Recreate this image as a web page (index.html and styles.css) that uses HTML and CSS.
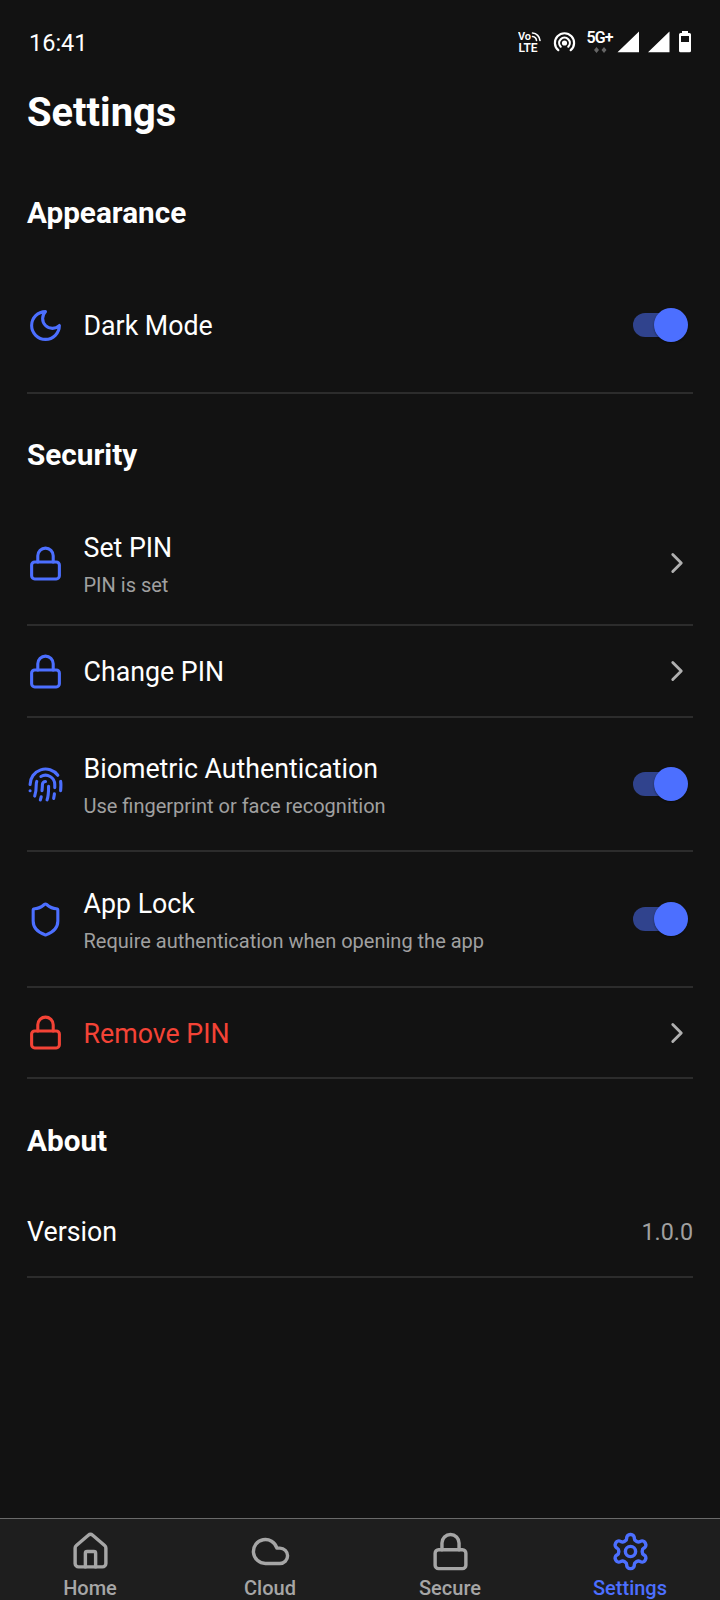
FILE: index.html
```html
<!DOCTYPE html>
<html lang="en">
<head>
<meta charset="utf-8">
<title>Settings</title>
<link rel="stylesheet" href="styles.css">
</head>
<body>
<svg class="sprite" width="0" height="0">
  <symbol id="lock" viewBox="0 0 24 24"><rect x="3" y="11" width="18" height="11" rx="2"/><path d="M7 11V7a5 5 0 0 1 10 0v4"/></symbol>
  <symbol id="chevron" viewBox="0 0 24 24"><path d="m9 18 6-6-6-6"/></symbol>
</svg>
<div class="screen">
  <header class="status">
    <span class="clock">16:41</span>
    <svg class="status-icons" viewBox="0 0 180 30" width="180" height="30">
      <g class="status-text">
        <text x="0" y="12.5" font-size="11" textLength="13">Vo</text>
        <text x="0.5" y="25" font-size="12" textLength="19">LTE</text>
        <text x="68.5" y="15.5" font-size="16" textLength="27">5G+</text>
      </g>
      <g class="status-line">
        <path d="M14.500 6a8 8 0 0 1 7.500 7.500M14.500 9.500a4.500 4.500 0 0 1 4 4" stroke-width="1.600"/>
        <path d="M40.300 23.200a9.600 9.600 0 1 1 12.400 0M42.700 19.700a5.300 5.300 0 1 1 7.600 0" stroke-width="2.200"/>
      </g>
      <circle class="fill" cx="46.500" cy="16" r="2.600"/>
      <path class="arrows" d="M78.500 20l2.500 3-2.500 3-2.500-3zM86 20l2.500 3-2.500 3-2.500-3z"/>
      <path class="fill" d="M99.500 25.300L121 4.500v20.800zM130 25.300L151.500 4.500v20.800z"/>
      <path class="fill" fill-rule="evenodd" d="M164 4h6v2h1.500q1.500 0 1.500 1.500v16.300q0 1.500-1.500 1.500h-9q-1.500 0-1.500-1.500V7.500q0-1.500 1.500-1.500h1.500zM163 9v6h8V9z"/>
    </svg>
  </header>

  <main class="content">
    <h1 class="title">Settings</h1>

    <h2 class="section section-appearance">Appearance</h2>
    <div class="row row-dark">
      <svg class="icon" viewBox="0 0 24 24"><path d="M12 3a6 6 0 0 0 9 9 9 9 0 1 1-9-9Z"/></svg>
      <div class="label">Dark Mode</div>
      <div class="switch"><i class="thumb"></i></div>
    </div>

    <h2 class="section section-security">Security</h2>
    <div class="row row-set">
      <svg class="icon"><use href="#lock"/></svg>
      <div class="text"><div class="label">Set PIN</div><div class="sub">PIN is set</div></div>
      <svg class="chevron"><use href="#chevron"/></svg>
    </div>
    <div class="row row-change">
      <svg class="icon"><use href="#lock"/></svg>
      <div class="label">Change PIN</div>
      <svg class="chevron"><use href="#chevron"/></svg>
    </div>
    <div class="row row-bio">
      <svg class="icon" viewBox="0 0 24 24"><path d="M12 10a2 2 0 0 0-2 2c0 1.020-.1 2.510-.26 4M14 13.120c0 2.380 0 6.380-1 8.880M17.290 21.020c.12-.6.43-2.300.5-3.020M2 12a10 10 0 0 1 18-6M2 16h.01M21.800 16c.2-2 .131-5.354 0-6M5 19.500C5.500 18 6 15 6 12a6 6 0 0 1 .34-2M8.650 22c.21-.66.45-1.320.57-2M9 6.800a6 6 0 0 1 9 5.200v2"/></svg>
      <div class="text"><div class="label">Biometric Authentication</div><div class="sub">Use fingerprint or face recognition</div></div>
      <div class="switch"><i class="thumb"></i></div>
    </div>
    <div class="row row-applock">
      <svg class="icon" viewBox="0 0 24 24"><path d="M20 13c0 5-3.500 7.500-7.660 8.950a1 1 0 0 1-.67-.01C7.500 20.500 4 18 4 13V6a1 1 0 0 1 1-1c2 0 4.500-1.200 6.240-2.720a1.170 1.170 0 0 1 1.520 0C14.510 3.810 17 5 19 5a1 1 0 0 1 1 1z"/></svg>
      <div class="text"><div class="label">App Lock</div><div class="sub">Require authentication when opening the app</div></div>
      <div class="switch"><i class="thumb"></i></div>
    </div>
    <div class="row row-remove">
      <svg class="icon danger"><use href="#lock"/></svg>
      <div class="label danger">Remove PIN</div>
      <svg class="chevron"><use href="#chevron"/></svg>
    </div>

    <h2 class="section section-about">About</h2>
    <div class="row row-version">
      <div class="label">Version</div>
      <div class="value">1.0.0</div>
    </div>
  </main>

  <nav class="tabs">
    <div class="tab">
      <svg class="tab-icon" viewBox="0 0 24 24"><path d="M15 21v-8a1 1 0 0 0-1-1h-4a1 1 0 0 0-1 1v8"/><path d="M3 10a2 2 0 0 1 .709-1.528l7-5.999a2 2 0 0 1 2.582 0l7 5.999A2 2 0 0 1 21 10v9a2 2 0 0 1-2 2H5a2 2 0 0 1-2-2z"/></svg>
      <span>Home</span>
    </div>
    <div class="tab">
      <svg class="tab-icon" viewBox="0 0 24 24"><path d="M17.500 19H9a7 7 0 1 1 6.710-9h1.790a4.500 4.500 0 1 1 0 9Z"/></svg>
      <span>Cloud</span>
    </div>
    <div class="tab">
      <svg class="tab-icon"><use href="#lock"/></svg>
      <span>Secure</span>
    </div>
    <div class="tab active">
      <svg class="tab-icon" viewBox="0 0 24 24"><path d="M12.220 2h-.44a2 2 0 0 0-2 2v.18a2 2 0 0 1-1 1.730l-.43.25a2 2 0 0 1-2 0l-.15-.08a2 2 0 0 0-2.730.73l-.22.38a2 2 0 0 0 .73 2.730l.15.1a2 2 0 0 1 1 1.720v.51a2 2 0 0 1-1 1.740l-.15.09a2 2 0 0 0-.73 2.730l.22.38a2 2 0 0 0 2.730.73l.15-.08a2 2 0 0 1 2 0l.43.25a2 2 0 0 1 1 1.730V20a2 2 0 0 0 2 2h.44a2 2 0 0 0 2-2v-.18a2 2 0 0 1 1-1.730l.43-.25a2 2 0 0 1 2 0l.15.08a2 2 0 0 0 2.730-.73l.22-.39a2 2 0 0 0-.73-2.730l-.15-.08a2 2 0 0 1-1-1.740v-.5a2 2 0 0 1 1-1.740l.15-.09a2 2 0 0 0 .73-2.730l-.22-.38a2 2 0 0 0-2.730-.73l-.15.08a2 2 0 0 1-2 0l-.43-.25a2 2 0 0 1-1-1.730V4a2 2 0 0 0-2-2z"/><circle cx="12" cy="12" r="3"/></svg>
      <span>Settings</span>
    </div>
  </nav>
</div>
</body>
</html>
```
FILE: styles.css
```css
* { box-sizing: border-box; }
body { margin: 0; background: #121212; color: #fff; font-family: Roboto, "Liberation Sans", sans-serif; }
.sprite { display: block; position: absolute; }
.screen { width: 720px; height: 1600px; display: flex; flex-direction: column; overflow: hidden; }

.status { height: 84px; flex: none; display: flex; align-items: center; justify-content: space-between; padding: 0 22px 0 29px; }
.clock { font-size: 23.5px; line-height: 30px; padding-top: 1px; }
.status-icons { display: block; width: 180px; height: 30px; margin-bottom: 1px; }
.status-text { fill: #fff; font-weight: 600; }
.status-line { fill: none; stroke: #fff; stroke-linecap: round; }
.fill { fill: #fff; }
.arrows { fill: #666; }

.content { flex: 1; padding: 0 27px; }
.title { margin: 0; height: 54px; font-size: 39.9px; line-height: 57px; font-weight: 700; }
.section { margin: 0; height: 40px; font-size: 29.7px; line-height: 42px; font-weight: 700; }
.section-appearance { margin-top: 54px; margin-bottom: 26px; }
.section-security { margin-top: 40px; margin-bottom: 28px; }
.section-about { margin-top: 41px; margin-bottom: 26px; }

.row { display: flex; align-items: center; border-bottom: 2px solid #2c2c2c; }
.row-dark { height: 136px; }
.row-set { height: 124px; }
.row-change { height: 92px; }
.row-bio { height: 134px; }
.row-applock { height: 136px; }
.row-remove { height: 91px; }
.row-version { height: 92px; justify-content: space-between; }

.icon, .chevron, .tab-icon { flex: none; fill: none; stroke-width: 2; stroke-linecap: round; stroke-linejoin: round; }
.icon { width: 37px; height: 37px; margin-left: -0.5px; margin-right: 20px; stroke: #4c6fff; }
.icon.danger { stroke: #f44336; }
.chevron { width: 34px; height: 34px; margin-left: auto; margin-right: -0.5px; stroke: #b0b0b0; }
.text { display: grid; gap: 6px; padding-top: 2px; }
.label { font-size: 26.75px; line-height: 36px; }
.row > .label { padding-top: 2px; }
.label.danger { color: #f44336; }
.sub { font-size: 20px; line-height: 27px; color: #a0a0a0; }
.value { font-size: 23.3px; line-height: 32px; color: #a0a0a0; padding-top: 1px; }

.switch { width: 49px; height: 24px; margin: 0 11px 0 auto; border-radius: 12px; background: #30438d; display: flex; align-items: center; justify-content: flex-end; }
.thumb { flex: none; width: 34px; height: 34px; margin-right: -6px; border-radius: 50%; background: #4c6fff; box-shadow: 0 1px 2px rgba(0, 0, 0, .4); }

.tabs { height: 82px; flex: none; display: grid; grid-template-columns: repeat(4, 1fr); background: #1e1e1e; border-top: 1px solid #6a6a6a; }
.tab { display: flex; flex-direction: column; align-items: center; padding-top: 12px; color: #a6a6a6; font-size: 20px; line-height: 26px; font-weight: 500; }
.tab-icon { width: 41px; height: 41px; margin-bottom: 3px; stroke: #a6a6a6; }
.active { color: #4c6fff; }
.active .tab-icon { stroke: #4c6fff; }
```
